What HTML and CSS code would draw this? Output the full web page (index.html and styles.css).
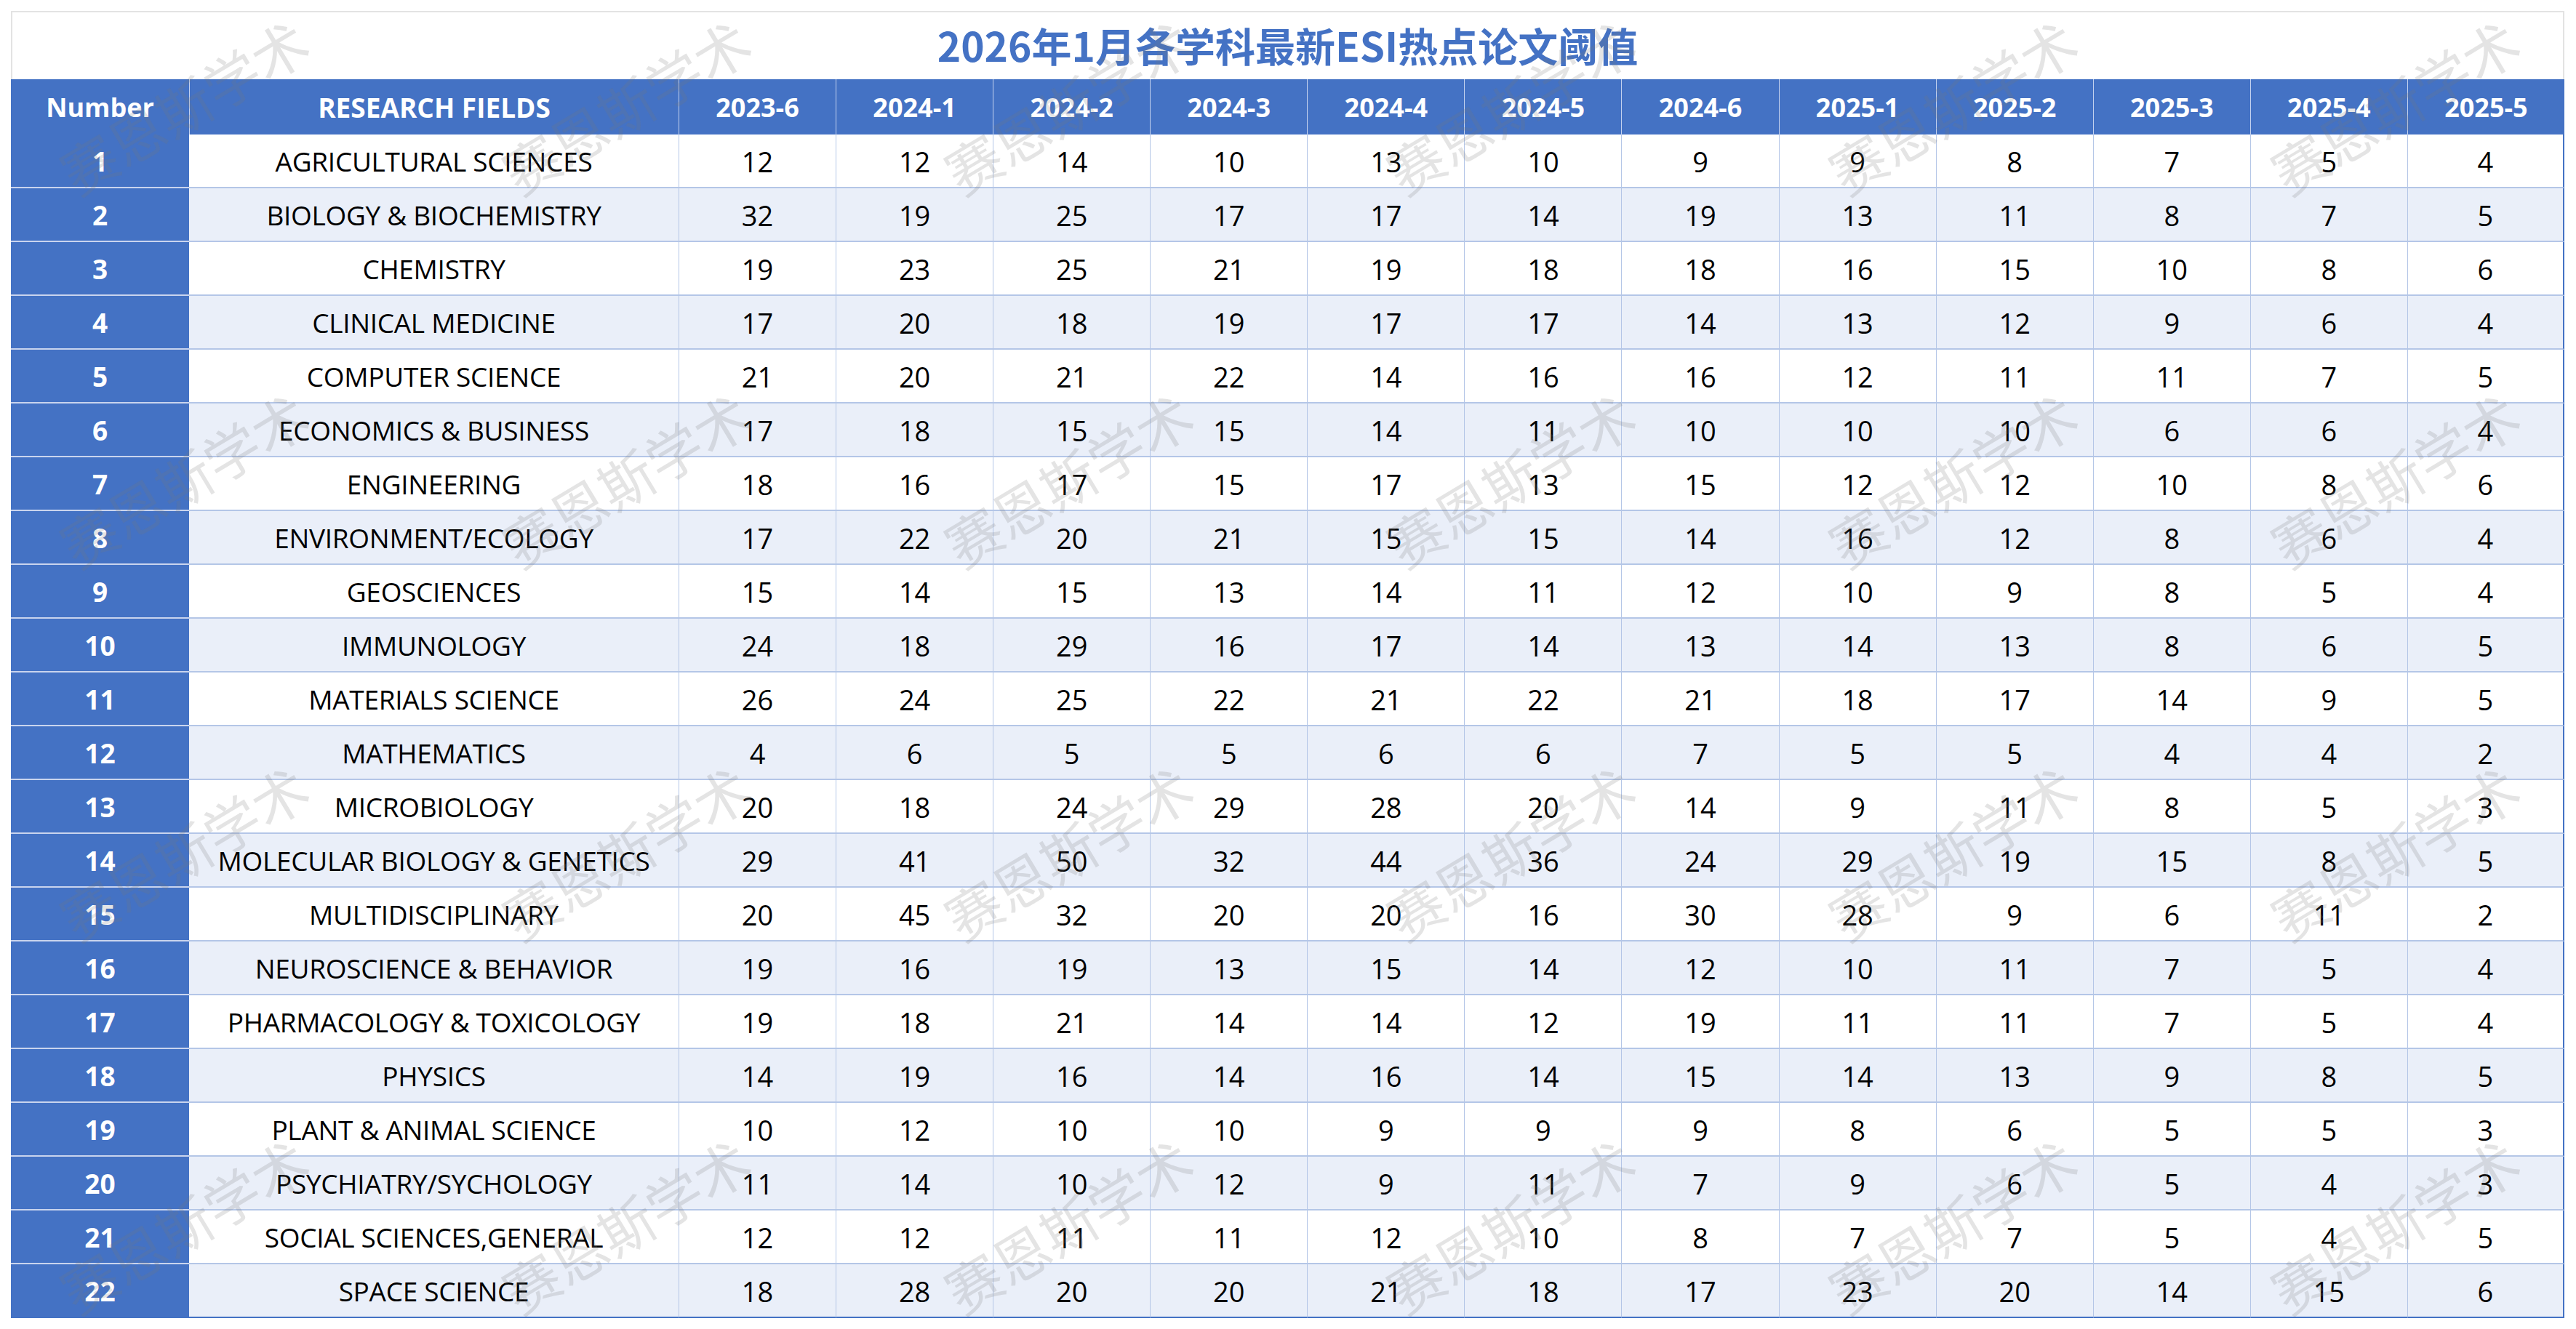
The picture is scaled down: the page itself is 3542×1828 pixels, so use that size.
FILE: index.html
```html
<!DOCTYPE html>
<html lang="zh-CN">
<head>
<meta charset="utf-8">
<title>2026年1月各学科最新ESI热点论文阈值</title>
<link rel="stylesheet" href="styles.css">
</head>
<body>
<div class="sheet">
  <div class="title-row"><h1 class="title">2026年1月各学科最新ESI热点论文阈值</h1></div>
  <div class="grid">
    <div class="row head">
      <div class="c num">Number</div><div class="c field">RESEARCH FIELDS</div>
      <div class="c">2023-6</div><div class="c">2024-1</div><div class="c">2024-2</div><div class="c">2024-3</div><div class="c">2024-4</div><div class="c">2024-5</div><div class="c">2024-6</div><div class="c">2025-1</div><div class="c">2025-2</div><div class="c">2025-3</div><div class="c">2025-4</div><div class="c">2025-5</div>
    </div>
    <div class="row"><div class="c num">1</div><div class="c field">AGRICULTURAL SCIENCES</div><div class="c">12</div><div class="c">12</div><div class="c">14</div><div class="c">10</div><div class="c">13</div><div class="c">10</div><div class="c">9</div><div class="c">9</div><div class="c">8</div><div class="c">7</div><div class="c">5</div><div class="c">4</div></div>
    <div class="row"><div class="c num">2</div><div class="c field">BIOLOGY &amp; BIOCHEMISTRY</div><div class="c">32</div><div class="c">19</div><div class="c">25</div><div class="c">17</div><div class="c">17</div><div class="c">14</div><div class="c">19</div><div class="c">13</div><div class="c">11</div><div class="c">8</div><div class="c">7</div><div class="c">5</div></div>
    <div class="row"><div class="c num">3</div><div class="c field">CHEMISTRY</div><div class="c">19</div><div class="c">23</div><div class="c">25</div><div class="c">21</div><div class="c">19</div><div class="c">18</div><div class="c">18</div><div class="c">16</div><div class="c">15</div><div class="c">10</div><div class="c">8</div><div class="c">6</div></div>
    <div class="row"><div class="c num">4</div><div class="c field">CLINICAL MEDICINE</div><div class="c">17</div><div class="c">20</div><div class="c">18</div><div class="c">19</div><div class="c">17</div><div class="c">17</div><div class="c">14</div><div class="c">13</div><div class="c">12</div><div class="c">9</div><div class="c">6</div><div class="c">4</div></div>
    <div class="row"><div class="c num">5</div><div class="c field">COMPUTER SCIENCE</div><div class="c">21</div><div class="c">20</div><div class="c">21</div><div class="c">22</div><div class="c">14</div><div class="c">16</div><div class="c">16</div><div class="c">12</div><div class="c">11</div><div class="c">11</div><div class="c">7</div><div class="c">5</div></div>
    <div class="row"><div class="c num">6</div><div class="c field">ECONOMICS &amp; BUSINESS</div><div class="c">17</div><div class="c">18</div><div class="c">15</div><div class="c">15</div><div class="c">14</div><div class="c">11</div><div class="c">10</div><div class="c">10</div><div class="c">10</div><div class="c">6</div><div class="c">6</div><div class="c">4</div></div>
    <div class="row"><div class="c num">7</div><div class="c field">ENGINEERING</div><div class="c">18</div><div class="c">16</div><div class="c">17</div><div class="c">15</div><div class="c">17</div><div class="c">13</div><div class="c">15</div><div class="c">12</div><div class="c">12</div><div class="c">10</div><div class="c">8</div><div class="c">6</div></div>
    <div class="row"><div class="c num">8</div><div class="c field">ENVIRONMENT/ECOLOGY</div><div class="c">17</div><div class="c">22</div><div class="c">20</div><div class="c">21</div><div class="c">15</div><div class="c">15</div><div class="c">14</div><div class="c">16</div><div class="c">12</div><div class="c">8</div><div class="c">6</div><div class="c">4</div></div>
    <div class="row"><div class="c num">9</div><div class="c field">GEOSCIENCES</div><div class="c">15</div><div class="c">14</div><div class="c">15</div><div class="c">13</div><div class="c">14</div><div class="c">11</div><div class="c">12</div><div class="c">10</div><div class="c">9</div><div class="c">8</div><div class="c">5</div><div class="c">4</div></div>
    <div class="row"><div class="c num">10</div><div class="c field">IMMUNOLOGY</div><div class="c">24</div><div class="c">18</div><div class="c">29</div><div class="c">16</div><div class="c">17</div><div class="c">14</div><div class="c">13</div><div class="c">14</div><div class="c">13</div><div class="c">8</div><div class="c">6</div><div class="c">5</div></div>
    <div class="row"><div class="c num">11</div><div class="c field">MATERIALS SCIENCE</div><div class="c">26</div><div class="c">24</div><div class="c">25</div><div class="c">22</div><div class="c">21</div><div class="c">22</div><div class="c">21</div><div class="c">18</div><div class="c">17</div><div class="c">14</div><div class="c">9</div><div class="c">5</div></div>
    <div class="row"><div class="c num">12</div><div class="c field">MATHEMATICS</div><div class="c">4</div><div class="c">6</div><div class="c">5</div><div class="c">5</div><div class="c">6</div><div class="c">6</div><div class="c">7</div><div class="c">5</div><div class="c">5</div><div class="c">4</div><div class="c">4</div><div class="c">2</div></div>
    <div class="row"><div class="c num">13</div><div class="c field">MICROBIOLOGY</div><div class="c">20</div><div class="c">18</div><div class="c">24</div><div class="c">29</div><div class="c">28</div><div class="c">20</div><div class="c">14</div><div class="c">9</div><div class="c">11</div><div class="c">8</div><div class="c">5</div><div class="c">3</div></div>
    <div class="row"><div class="c num">14</div><div class="c field">MOLECULAR BIOLOGY &amp; GENETICS</div><div class="c">29</div><div class="c">41</div><div class="c">50</div><div class="c">32</div><div class="c">44</div><div class="c">36</div><div class="c">24</div><div class="c">29</div><div class="c">19</div><div class="c">15</div><div class="c">8</div><div class="c">5</div></div>
    <div class="row"><div class="c num">15</div><div class="c field">MULTIDISCIPLINARY</div><div class="c">20</div><div class="c">45</div><div class="c">32</div><div class="c">20</div><div class="c">20</div><div class="c">16</div><div class="c">30</div><div class="c">28</div><div class="c">9</div><div class="c">6</div><div class="c">11</div><div class="c">2</div></div>
    <div class="row"><div class="c num">16</div><div class="c field">NEUROSCIENCE &amp; BEHAVIOR</div><div class="c">19</div><div class="c">16</div><div class="c">19</div><div class="c">13</div><div class="c">15</div><div class="c">14</div><div class="c">12</div><div class="c">10</div><div class="c">11</div><div class="c">7</div><div class="c">5</div><div class="c">4</div></div>
    <div class="row"><div class="c num">17</div><div class="c field">PHARMACOLOGY &amp; TOXICOLOGY</div><div class="c">19</div><div class="c">18</div><div class="c">21</div><div class="c">14</div><div class="c">14</div><div class="c">12</div><div class="c">19</div><div class="c">11</div><div class="c">11</div><div class="c">7</div><div class="c">5</div><div class="c">4</div></div>
    <div class="row"><div class="c num">18</div><div class="c field">PHYSICS</div><div class="c">14</div><div class="c">19</div><div class="c">16</div><div class="c">14</div><div class="c">16</div><div class="c">14</div><div class="c">15</div><div class="c">14</div><div class="c">13</div><div class="c">9</div><div class="c">8</div><div class="c">5</div></div>
    <div class="row"><div class="c num">19</div><div class="c field">PLANT &amp; ANIMAL SCIENCE</div><div class="c">10</div><div class="c">12</div><div class="c">10</div><div class="c">10</div><div class="c">9</div><div class="c">9</div><div class="c">9</div><div class="c">8</div><div class="c">6</div><div class="c">5</div><div class="c">5</div><div class="c">3</div></div>
    <div class="row"><div class="c num">20</div><div class="c field">PSYCHIATRY/SYCHOLOGY</div><div class="c">11</div><div class="c">14</div><div class="c">10</div><div class="c">12</div><div class="c">9</div><div class="c">11</div><div class="c">7</div><div class="c">9</div><div class="c">6</div><div class="c">5</div><div class="c">4</div><div class="c">3</div></div>
    <div class="row"><div class="c num">21</div><div class="c field">SOCIAL SCIENCES,GENERAL</div><div class="c">12</div><div class="c">12</div><div class="c">11</div><div class="c">11</div><div class="c">12</div><div class="c">10</div><div class="c">8</div><div class="c">7</div><div class="c">7</div><div class="c">5</div><div class="c">4</div><div class="c">5</div></div>
    <div class="row"><div class="c num">22</div><div class="c field">SPACE SCIENCE</div><div class="c">18</div><div class="c">28</div><div class="c">20</div><div class="c">20</div><div class="c">21</div><div class="c">18</div><div class="c">17</div><div class="c">23</div><div class="c">20</div><div class="c">14</div><div class="c">15</div><div class="c">6</div></div>
  </div>
</div>
<div class="wm-layer" aria-hidden="true">
  <div class="wm-grid">
    <span class="wm">赛恩斯学术</span><span class="wm">赛恩斯学术</span><span class="wm">赛恩斯学术</span><span class="wm">赛恩斯学术</span><span class="wm">赛恩斯学术</span><span class="wm">赛恩斯学术</span>
    <span class="wm">赛恩斯学术</span><span class="wm">赛恩斯学术</span><span class="wm">赛恩斯学术</span><span class="wm">赛恩斯学术</span><span class="wm">赛恩斯学术</span><span class="wm">赛恩斯学术</span>
    <span class="wm">赛恩斯学术</span><span class="wm">赛恩斯学术</span><span class="wm">赛恩斯学术</span><span class="wm">赛恩斯学术</span><span class="wm">赛恩斯学术</span><span class="wm">赛恩斯学术</span>
    <span class="wm">赛恩斯学术</span><span class="wm">赛恩斯学术</span><span class="wm">赛恩斯学术</span><span class="wm">赛恩斯学术</span><span class="wm">赛恩斯学术</span><span class="wm">赛恩斯学术</span>
  </div>
</div>
</body>
</html>
```

FILE: styles.css
```css
* { box-sizing: border-box; }

html, body {
  margin: 0;
  padding: 0;
  background: #ffffff;
}

body {
  position: relative;
  width: 3542px;
  height: 1828px;
  overflow: hidden;
  font-family: "Open Sans", "Noto Sans", "Noto Sans CJK SC", sans-serif;
  color: #000000;
}

.sheet {
  margin: 15px 16px 0 15px;
  width: 3511px;
}

.title-row {
  height: 94px;
  border-top: 2px solid #e3e3e3;
  border-left: 2px solid #e3e3e3;
  border-right: 2px solid #e3e3e3;
  display: flex;
  align-items: center;
  justify-content: center;
  padding-bottom: 4px;
}

.title {
  margin: 0;
  font-family: "Noto Sans CJK SC", "Noto Sans", sans-serif;
  font-weight: 700;
  font-size: 55px;
  line-height: 1;
  color: #4472c4;
  letter-spacing: 0;
}

.grid {
  display: flex;
  flex-direction: column;
}

.row {
  display: grid;
  grid-template-columns: 245px 673px repeat(12, 1fr);
  height: 74px;
  background: #ffffff;
}

.row:nth-child(odd) {
  background: #eaeff9;
}

.row.head {
  height: 76px;
  background: #4472c4;
}

.c {
  display: flex;
  align-items: center;
  justify-content: center;
  white-space: nowrap;
  font-size: 38px;
  border-left: 1px solid #b4c6e7;
  border-bottom: 2px solid #b4c6e7;
  padding-top: 1px;
}

.c.field {
  border-left: none;
  font-size: 37px;
  letter-spacing: -0.3px;
}

.c.num {
  border-left: none;
  background: #4472c4;
  color: #ffffff;
  font-weight: 700;
  font-size: 37px;
  border-bottom: 2px solid #c9d4ee;
}

.c:last-child {
  border-right: 2px solid #4472c4;
}

.row.head .c {
  color: #ffffff;
  font-weight: 700;
  font-size: 36px;
  border-bottom: none;
  border-left: 1px solid #c3d1ee;
  border-right: none;
  padding-top: 0;
}

.row.head .c.field {
  font-size: 37px;
  letter-spacing: 0;
}

.row.head .c.num {
  border-left: none;
}

.row:last-child .c {
  border-bottom: 2px solid #4472c4;
}

.wm-layer {
  position: absolute;
  left: 0;
  top: 0;
  width: 3542px;
  height: 1828px;
  overflow: hidden;
  pointer-events: none;
}

.wm-grid {
  position: absolute;
  left: -52px;
  top: -112px;
  display: grid;
  grid-template-columns: repeat(6, 608px);
  grid-template-rows: repeat(4, 513px);
}

.wm {
  place-self: center;
  display: block;
  font-family: "Noto Sans CJK SC", sans-serif;
  font-weight: 400;
  font-size: 76px;
  line-height: 1;
  color: rgba(120, 120, 120, 0.2);
  transform: rotate(-31deg);
  white-space: nowrap;
}
```
